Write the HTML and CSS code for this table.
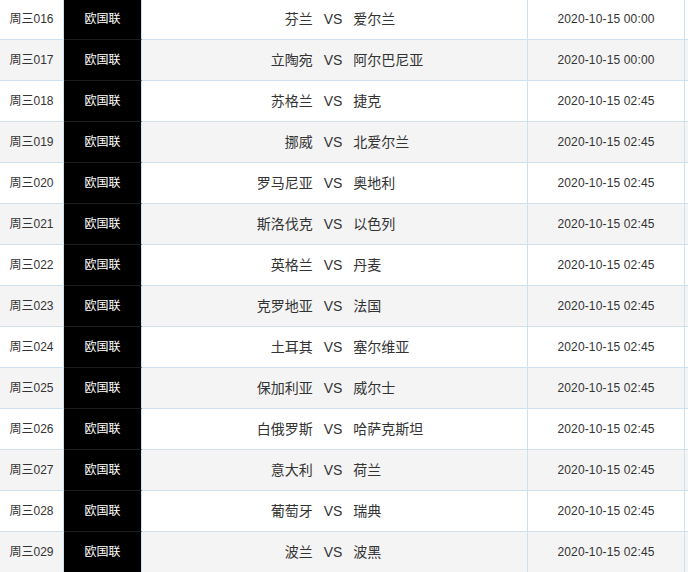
FILE: index.html
```html
<!DOCTYPE html>
<html lang="zh-CN">
<head>
<meta charset="utf-8">
<title>赛程</title>
<link rel="stylesheet" href="styles.css">
</head>
<body>
<div class="list">
  <div class="row"><div class="c no">周三016</div><div class="c lg">欧国联</div><div class="c match"><span class="home">芬兰</span><span class="vs">VS</span><span class="away">爱尔兰</span></div><div class="c time">2020-10-15 00:00</div><div class="c end"></div></div>
  <div class="row alt"><div class="c no">周三017</div><div class="c lg">欧国联</div><div class="c match"><span class="home">立陶宛</span><span class="vs">VS</span><span class="away">阿尔巴尼亚</span></div><div class="c time">2020-10-15 00:00</div><div class="c end"></div></div>
  <div class="row"><div class="c no">周三018</div><div class="c lg">欧国联</div><div class="c match"><span class="home">苏格兰</span><span class="vs">VS</span><span class="away">捷克</span></div><div class="c time">2020-10-15 02:45</div><div class="c end"></div></div>
  <div class="row alt"><div class="c no">周三019</div><div class="c lg">欧国联</div><div class="c match"><span class="home">挪威</span><span class="vs">VS</span><span class="away">北爱尔兰</span></div><div class="c time">2020-10-15 02:45</div><div class="c end"></div></div>
  <div class="row"><div class="c no">周三020</div><div class="c lg">欧国联</div><div class="c match"><span class="home">罗马尼亚</span><span class="vs">VS</span><span class="away">奥地利</span></div><div class="c time">2020-10-15 02:45</div><div class="c end"></div></div>
  <div class="row alt"><div class="c no">周三021</div><div class="c lg">欧国联</div><div class="c match"><span class="home">斯洛伐克</span><span class="vs">VS</span><span class="away">以色列</span></div><div class="c time">2020-10-15 02:45</div><div class="c end"></div></div>
  <div class="row"><div class="c no">周三022</div><div class="c lg">欧国联</div><div class="c match"><span class="home">英格兰</span><span class="vs">VS</span><span class="away">丹麦</span></div><div class="c time">2020-10-15 02:45</div><div class="c end"></div></div>
  <div class="row alt"><div class="c no">周三023</div><div class="c lg">欧国联</div><div class="c match"><span class="home">克罗地亚</span><span class="vs">VS</span><span class="away">法国</span></div><div class="c time">2020-10-15 02:45</div><div class="c end"></div></div>
  <div class="row"><div class="c no">周三024</div><div class="c lg">欧国联</div><div class="c match"><span class="home">土耳其</span><span class="vs">VS</span><span class="away">塞尔维亚</span></div><div class="c time">2020-10-15 02:45</div><div class="c end"></div></div>
  <div class="row alt"><div class="c no">周三025</div><div class="c lg">欧国联</div><div class="c match"><span class="home">保加利亚</span><span class="vs">VS</span><span class="away">威尔士</span></div><div class="c time">2020-10-15 02:45</div><div class="c end"></div></div>
  <div class="row"><div class="c no">周三026</div><div class="c lg">欧国联</div><div class="c match"><span class="home">白俄罗斯</span><span class="vs">VS</span><span class="away">哈萨克斯坦</span></div><div class="c time">2020-10-15 02:45</div><div class="c end"></div></div>
  <div class="row alt"><div class="c no">周三027</div><div class="c lg">欧国联</div><div class="c match"><span class="home">意大利</span><span class="vs">VS</span><span class="away">荷兰</span></div><div class="c time">2020-10-15 02:45</div><div class="c end"></div></div>
  <div class="row"><div class="c no">周三028</div><div class="c lg">欧国联</div><div class="c match"><span class="home">葡萄牙</span><span class="vs">VS</span><span class="away">瑞典</span></div><div class="c time">2020-10-15 02:45</div><div class="c end"></div></div>
  <div class="row alt"><div class="c no">周三029</div><div class="c lg">欧国联</div><div class="c match"><span class="home">波兰</span><span class="vs">VS</span><span class="away">波黑</span></div><div class="c time">2020-10-15 02:45</div><div class="c end"></div></div>
</div>
</body>
</html>
```
FILE: styles.css
```css
html, body {
  margin: 0;
  padding: 0;
  background: #fff;
}
body {
  font-family: "Liberation Sans", "Noto Sans CJK SC", sans-serif;
  font-size: 12px;
  color: #333;
  overflow: hidden;
}
.list {
  margin-top: -1px;
  width: 688px;
}
.row {
  display: flex;
  height: 41px;
  background: #fff;
}
.row.alt {
  background: #f4f4f4;
}
.c {
  box-sizing: border-box;
  height: 41px;
  border-bottom: 1px solid #cfe0f0;
  border-right: 1px solid #cfe0f0;
  display: flex;
  align-items: center;
  justify-content: center;
  line-height: 16px;
  white-space: nowrap;
}
.no {
  width: 64px;
}
.lg {
  width: 78px;
  background: #000;
  color: #fff;
  border-bottom-color: #1c1c1c;
}
.match {
  width: 386px;
  font-size: 14px;
  padding-right: 3px;
}
.home {
  flex: 1;
  text-align: right;
}
.away {
  flex: 1;
  text-align: left;
}
.vs {
  padding: 0 11px;
}
.time {
  width: 157px;
  letter-spacing: 0.15px;
}
.end {
  flex: 1;
  border-right: 0;
}
```
